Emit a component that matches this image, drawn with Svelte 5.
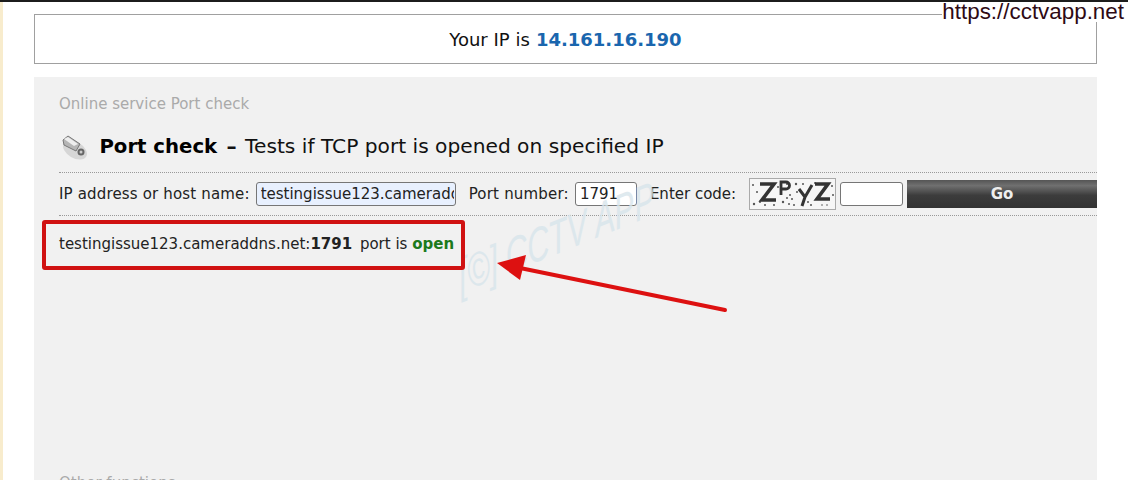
<script>
	let ip = '14.161.16.190';
	let host = $state('testingissue123.cameraddns.net');
	let port = $state('1791');
	let code = $state('');
</script>

<div class="page">
	<div class="ip-box">Your IP is <b>{ip}</b></div>

	<div class="panel">
		<div class="crumb">Online service Port check</div>

		<h1>
			<svg class="cam" width="30" height="28" viewBox="0 0 30 28">
				<ellipse cx="16" cy="17" rx="13" ry="8" fill="#bbb" transform="rotate(30 16 17)" opacity="0.5" />
				<path d="M4 7 L9 3 L21 11 L17 18 L5 12 Z" fill="#b5b5b5" stroke="#777" stroke-width="1" />
				<path d="M5 6 L9 4 L19 11 L15 13 Z" fill="#eee" />
				<circle cx="22" cy="19" r="3.5" fill="#666" />
				<circle cx="22" cy="19" r="1.5" fill="#ccc" />
			</svg>
			<strong>Port check</strong> <b class="dash">–</b> Tests if TCP port is opened on specified IP
		</h1>

		<form class="check" onsubmit={(e) => e.preventDefault()}>
			<label for="host" class="host-label">IP address or host name:</label>
			<input id="host" class="host" bind:value={host} />
			<label for="port" class="gap">Port number:</label>
			<input id="port" class="port" bind:value={port} />
			<label for="code" class="gap code-label">Enter code:</label>
			<svg class="captcha" width="87" height="32" viewBox="0 0 87 32">
				<rect x="0.5" y="0.5" width="86" height="31" fill="#f6f6f6" stroke="#aaa" />
				<g fill="#555">
					<circle cx="4" cy="7" r="1" /><circle cx="8" cy="14" r="1" /><circle cx="11" cy="24" r="1" /><circle cx="5" cy="26" r="1.2" />
					<circle cx="16" cy="27" r="1" /><circle cx="29" cy="9" r="1" /><circle cx="34" cy="24" r="1.2" />
					<circle cx="41" cy="17" r="1" /><circle cx="45" cy="27" r="1" /><circle cx="47" cy="6" r="1.2" />
					<circle cx="43" cy="21" r="1" /><circle cx="38" cy="20" r="1" /><circle cx="40" cy="26" r="1" />
					<circle cx="59" cy="24" r="1" /><circle cx="62" cy="27" r="1" /><circle cx="78" cy="27" r="0.8" /><circle cx="73" cy="27" r="0.8" />
					<circle cx="83" cy="8" r="1" /><circle cx="38" cy="6" r="1" /><circle cx="25" cy="27" r="1" />
					<circle cx="54" cy="6" r="1" /><circle cx="66" cy="5" r="1" /><circle cx="84" cy="17" r="1" /><circle cx="48" cy="14" r="1" />
				</g>
				<g fill="none" stroke="#333" stroke-width="3.6">
					<path d="M11 6 H25 L13 22 H27" />
					<path d="M32 17 V4 H37 A3 3 0 0 1 37 11 H32" stroke-width="2.8" />
					<path d="M50 11 L56 19 L63 7 M56 19 L53 28" stroke-width="3" />
					<path d="M66 6 H79 L68 21 H81" />
				</g>
			</svg>
			<input id="code" class="code" bind:value={code} />
			<button type="submit">Go</button>
		</form>

		<p class="result">testingissue123.cameraddns.net:<b class="num">1791</b> port is <b class="open">open</b></p>

		<div class="other">Other functions</div>
	</div>

	<span class="url">https://cctvapp.net</span>

	<div class="mark">[©] CCTV APP</div>
	<div class="redbox"></div>
	<svg class="arrow" width="240" height="70" viewBox="0 0 240 70">
		<path d="M235 58 L30 16" stroke="#dd1111" stroke-width="4" stroke-linecap="round" fill="none" />
		<path d="M7 11 L36 3 L30 28 Z" fill="#dd1111" />
	</svg>
</div>

<style>
	:global(body) {
		margin: 0;
		background: #fff;
	}

	.page {
		position: relative;
		box-sizing: border-box;
		width: 1128px;
		height: 480px;
		overflow: hidden;
		padding: 12px 31px 0 34px;
		border-top: 2px solid #1c1c1c;
		font-family: 'DejaVu Sans', Verdana, sans-serif;
		color: #111;
		background: linear-gradient(to right, #f8eccd 3px, #fff 3px);
	}

	.ip-box {
		box-sizing: border-box;
		height: 50px;
		border: 1px solid #a0a0a0;
		display: flex;
		align-items: center;
		justify-content: center;
		gap: 0.34em;
		font-size: 18px;
		background: #fff;
	}

	.ip-box b {
		color: #1a66ae;
	}

	.panel {
		box-sizing: border-box;
		height: 500px;
		margin-top: 13px;
		padding: 19px 0 0 25px;
		background: #f1f1f1;
	}

	.crumb {
		font-size: 15px;
		line-height: 17px;
		color: #aaa;
	}

	h1 {
		margin: 20px 0 0;
		height: 39px;
		display: block;
		font-size: 20.2px;
		font-weight: 400;
		line-height: 26px;
		white-space: nowrap;
		color: #111;
	}

	h1 strong {
		font-size: 19.7px;
		color: #000;
	}

	.dash {
		margin: 0 2px 0 3px;
	}

	.cam {
		vertical-align: -8px;
		margin-right: 4px;
	}

	.check {
		box-sizing: border-box;
		height: 44px;
		display: flex;
		align-items: center;
		border-top: 1px dotted #999;
		border-bottom: 1px dotted #999;
		font-size: 15px;
		white-space: nowrap;
	}

	label {
		color: #222;
		letter-spacing: 0.2px;
	}

	.host-label {
		letter-spacing: 0.16px;
	}

	.code-label {
		letter-spacing: 0;
	}

	.gap {
		margin-left: 13px;
	}

	input {
		box-sizing: border-box;
		height: 24px;
		padding: 0 4px;
		border: 1px solid #767676;
		border-radius: 3px;
		background: #fff;
		font: inherit;
		color: #222;
		outline: none;
	}

	.host {
		width: 200px;
		margin-left: 6px;
		padding-right: 1px;
		background: #e8f0fe;
	}

	.port {
		width: 62px;
		margin-left: 6px;
	}

	.captcha {
		margin-left: 13px;
		flex: none;
	}

	.code {
		width: 63px;
		margin-left: 4px;
	}

	button {
		flex: 1;
		height: 28px;
		margin-left: 4px;
		padding: 0;
		border: none;
		background: linear-gradient(to bottom, #555 0%, #707070 20%, #3c3c3c 55%, #333 100%);
		color: #eee;
		font-family: 'DejaVu Sans', Verdana, sans-serif;
		font-size: 15px;
		font-weight: 700;
	}

	.result {
		margin: 18px 0 0;
		font-size: 15px;
		line-height: 20px;
		white-space: nowrap;
		color: #222;
	}

	.num {
		margin-right: 3px;
	}

	.open {
		color: #1c7a1c;
	}

	.other {
		margin-top: 221px;
		font-size: 15px;
		line-height: 17px;
		color: #aaa;
	}

	.url {
		position: absolute;
		top: 0;
		right: 4px;
		font-family: 'Liberation Sans', Arial, sans-serif;
		font-size: 22.4px;
		line-height: 20px;
		color: #2e0a14;
		background: #fff;
	}

	.mark {
		position: absolute;
		left: 462px;
		top: 250px;
		font-family: 'Liberation Sans', sans-serif;
		font-style: italic;
		font-size: 46px;
		line-height: 50px;
		white-space: nowrap;
		color: #d8e5ec;
		opacity: 0.8;
		transform: rotate(-22deg) skewX(-15deg) scaleX(0.7);
		transform-origin: left bottom;
	}

	.redbox {
		position: absolute;
		left: 42px;
		top: 218px;
		width: 423px;
		height: 50px;
		box-sizing: border-box;
		border: 4px solid #d01212;
		border-radius: 3px;
	}

	.arrow {
		position: absolute;
		left: 490px;
		top: 250px;
	}
</style>
